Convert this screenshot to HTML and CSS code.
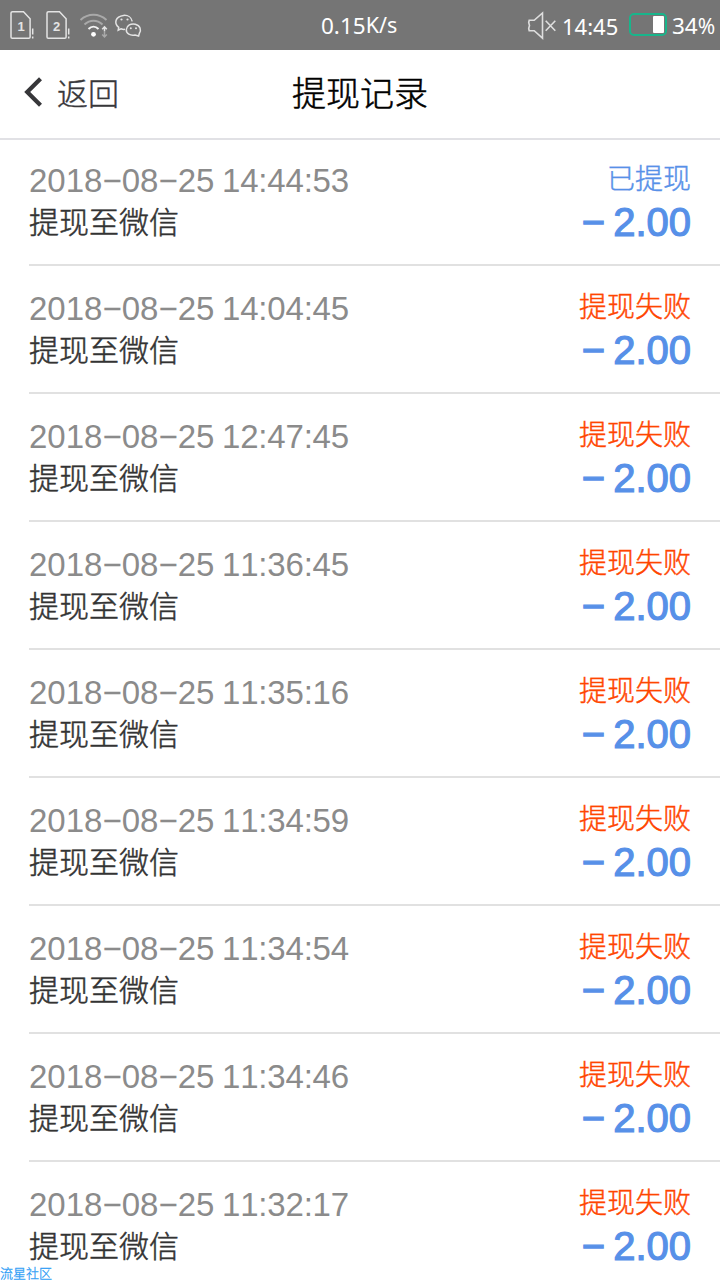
FILE: index.html
```html
<!DOCTYPE html>
<html lang="zh-CN">
<head>
<meta charset="utf-8">
<title>提现记录</title>
<link rel="stylesheet" href="styles.css">
</head>
<body>
<div class="status">
  <div class="status-left">
    <svg class="sys-icons" width="144" height="50" viewBox="0 0 144 50" fill="none" stroke="#e4e4e4" stroke-width="1.5">
      <path d="M12.5 11.7h11l6.600 7V37c0 .8-.5 1.300-1.300 1.300H12.300c-.8 0-1.300-.5-1.300-1.300V13c0-.8.6-1.300 1.500-1.300z"/>
      <path d="M48.500 11.700h11l6.600 7V37c0 .8-.5 1.300-1.300 1.300H48.300c-.8 0-1.300-.5-1.300-1.300V13c0-.8.6-1.300 1.500-1.300z"/>
      <path d="M32.700 28.500v6m0 2v2M68.700 28.500v6m0 2v2"/>
      <g stroke="none" fill="#e4e4e4" class="sim-num"><text x="17.500" y="31">1</text><text x="53" y="31">2</text></g>
      <path d="M80.500 20c7.500-7 18.500-7 26 0M84.500 24.500c5.500-5 12.500-5 18 0" stroke="#a9a9a9" stroke-width="2"/>
      <path d="M88.500 29c3-3 7-3 10 0" stroke="#f4f4f4" stroke-width="2"/>
      <circle cx="93.500" cy="34.300" r="2.400" fill="#fff" stroke="none"/>
      <path d="M104.500 31.500v-4.500m-2.300 2.300 2.300-2.500 2.300 2.500" stroke="#e4e4e4"/>
      <path d="M104.500 32v5m-2.300-2.500 2.300 2.500 2.300-2.500" stroke="#a9a9a9"/>
      <path d="M125 29.300c-1.600.3-2.800 0-4-.5l-2.800 1.300.5-2.700c-5-4-3.500-11 4.800-12 4.500-.4 8 2 8.700 6"/>
      <path d="M139.300 33.500c2.300-3.500 1-8-4-9.300-4.500-1-8.500 1.300-9 5.300-.3 4.200 4 6.500 8.800 5.500l3.500 1z"/>
      <g fill="#e4e4e4" stroke="none"><circle cx="121.500" cy="19.500" r="1.100"/><circle cx="127.500" cy="19.500" r="1.100"/><circle cx="130.800" cy="28.200" r="1"/><circle cx="136" cy="28.200" r="1"/></g>
    </svg>
  </div>
  <div class="speed">0.15<span class="unit">K/s</span></div>
  <div class="status-right">
    <svg class="mute" width="32" height="50" viewBox="0 0 32 50" fill="none" stroke="#dedede" stroke-width="1.600">
      <path d="M15.500 13v25.200l-8.300-7.500H2.200l-.5-2.200 .8-3-.8-3 .5-2.200h5z"/>
      <path d="m18.700 20.700 9.600 10m0-10-9.600 10"/>
    </svg>
    <span class="clock">14:45</span>
    <span class="battery"><span class="charge"></span></span>
    <span class="percent">34<span class="sign">%</span></span>
  </div>
</div>
<div class="nav">
  <div class="back">
    <svg width="20" height="30" viewBox="0 0 20 30" fill="none" stroke="#37373a" stroke-width="4.200"><path d="M18.500 1.700 5.200 15l13.300 13.300"/></svg>
    <span>返回</span>
  </div>
  <h1 class="title">提现记录</h1>
</div>
<div class="list">
  <div class="row"><div class="info"><div class="date">2018−08−25 <span class="time">14:44:53</span></div><div class="desc">提现至微信</div></div><div class="result"><div class="state">已提现</div><div class="amount">− 2.00</div></div></div>
  <div class="row"><div class="info"><div class="date">2018−08−25 <span class="time">14:04:45</span></div><div class="desc">提现至微信</div></div><div class="result"><div class="state failed">提现失败</div><div class="amount">− 2.00</div></div></div>
  <div class="row"><div class="info"><div class="date">2018−08−25 <span class="time">12:47:45</span></div><div class="desc">提现至微信</div></div><div class="result"><div class="state failed">提现失败</div><div class="amount">− 2.00</div></div></div>
  <div class="row"><div class="info"><div class="date">2018−08−25 <span class="time">11:36:45</span></div><div class="desc">提现至微信</div></div><div class="result"><div class="state failed">提现失败</div><div class="amount">− 2.00</div></div></div>
  <div class="row"><div class="info"><div class="date">2018−08−25 <span class="time">11:35:16</span></div><div class="desc">提现至微信</div></div><div class="result"><div class="state failed">提现失败</div><div class="amount">− 2.00</div></div></div>
  <div class="row"><div class="info"><div class="date">2018−08−25 <span class="time">11:34:59</span></div><div class="desc">提现至微信</div></div><div class="result"><div class="state failed">提现失败</div><div class="amount">− 2.00</div></div></div>
  <div class="row"><div class="info"><div class="date">2018−08−25 <span class="time">11:34:54</span></div><div class="desc">提现至微信</div></div><div class="result"><div class="state failed">提现失败</div><div class="amount">− 2.00</div></div></div>
  <div class="row"><div class="info"><div class="date">2018−08−25 <span class="time">11:34:46</span></div><div class="desc">提现至微信</div></div><div class="result"><div class="state failed">提现失败</div><div class="amount">− 2.00</div></div></div>
  <div class="row"><div class="info"><div class="date">2018−08−25 <span class="time">11:32:17</span></div><div class="desc">提现至微信</div></div><div class="result"><div class="state failed">提现失败</div><div class="amount">− 2.00</div></div></div>
</div>
<div class="watermark">流星社区</div>
</body>
</html>
```
FILE: styles.css
```css
* { box-sizing: border-box; }
html, body { margin: 0; height: 1280px; overflow: hidden; }
body {
  position: relative;
  width: 720px;
  background: #fff;
  font-family: "Liberation Sans", "Noto Sans CJK SC", sans-serif;
  font-weight: 300;
  font-kerning: none;
}
.status {
  display: grid;
  grid-template-columns: 321px 1fr auto;
  height: 50px;
  padding-right: 4px;
  background: #757575;
  color: #fff;
  font: 400 22.5px/50px "Noto Sans", sans-serif;
}
.sys-icons { display: block; }
.sim-num { font: 700 13px "Liberation Sans", sans-serif; }
.unit { font-size: 21.5px; vertical-align: 1px; }
.status-right { display: flex; align-items: center; height: 50px; }
.mute { margin-left: -1px; }
.clock { width: 70px; padding: 2px 0 0 3px; font-size: 22px; }
.battery {
  display: flex;
  justify-content: flex-end;
  width: 38px;
  height: 23px;
  margin-top: -2px;
  padding: 1px;
  border: 2px solid #18b58b;
  border-radius: 5px;
}
.charge { width: 11px; background: #fff; border-radius: 1px; }
.percent { margin-left: 5px; width: 44px; padding-top: 2px; white-space: nowrap; }
.sign { font-size: 21px; }
.nav {
  display: grid;
  grid-template-columns: 1fr auto 1fr;
  align-items: center;
  height: 90px;
  padding: 0 22px 2px;
  border-bottom: 2px solid #e1e1e5;
}
.back { display: flex; align-items: center; gap: 15px; font-size: 31px; line-height: 40px; color: #37373a; -webkit-text-stroke: .4px; }
.back svg { margin-top: -2px; }
.back span { padding-top: 3px; }
.title { margin: 0; padding-top: 1px; font-size: 34px; line-height: 44px; font-weight: 300; color: #000; -webkit-text-stroke: .5px; }
.list { margin-top: -2px; padding-left: 29px; }
.row {
  display: flex;
  justify-content: space-between;
  height: 128px;
  padding: 22px 29px 0 0;
}
.row:not(:last-child) { box-shadow: inset 0 -2px #e1e1e1; }
.date { font-size: 33px; line-height: 42px; color: #8b8b8b; }
.time { margin-left: -1.5px; letter-spacing: -.2px; }
.desc { font-size: 30px; line-height: 42px; color: #333; -webkit-text-stroke: .5px; }
.result { padding-top: 1px; text-align: right; }
.state { font-size: 28px; line-height: 38px; color: #5790e8; -webkit-text-stroke: .4px; }
.state.failed { color: #ff4500; }
.amount { font-size: 40px; line-height: 46px; color: #5790e8; word-spacing: -3px; -webkit-text-stroke: 1.2px #5790e8; }
.watermark { position: absolute; left: 0; bottom: -2px; font-size: 13px; line-height: 16px; color: #2c9cf5; -webkit-text-stroke: .3px; }
```
